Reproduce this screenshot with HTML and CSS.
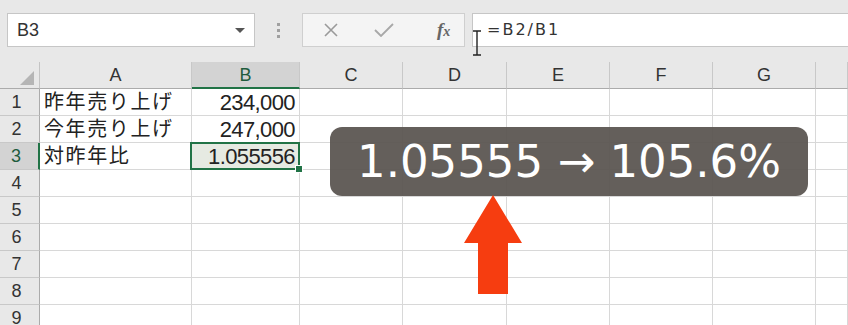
FILE: index.html
```html
<!DOCTYPE html>
<html lang="ja">
<head>
    <meta charset="UTF-8">
    <meta name="viewport" content="width=device-width, initial-scale=1.0">
    <title>対昨年比</title>
    <link rel="stylesheet" href="styles.css">
</head>
<body>
    <div class="toolbar">
        <div class="namebox">
            <span>B3</span>
            <svg class="caret" width="10" height="5" viewBox="0 0 10 5"><polygon points="0,0 10,0 5,5" fill="#555"/></svg>
        </div>
        <div class="grip"><i></i><i></i><i></i></div>
        <div class="fxbuttons">
            <svg width="16" height="14" viewBox="0 0 16 14"><path d="M2 1 L14 13 M14 1 L2 13" stroke="#9a9a9a" stroke-width="1.6" fill="none"/></svg>
            <svg width="20" height="14" viewBox="0 0 20 14"><path d="M1 7 L7 13 L19 1" stroke="#a8a8a8" stroke-width="1.8" fill="none"/></svg>
            <span class="fx">f<small>x</small></span>
        </div>
        <div class="formula">=B2/B1</div>
    </div>

    <div class="sheet">
        <div class="corner"><svg width="14" height="14" viewBox="0 0 14 14"><polygon points="14,0 14,14 0,14" fill="#b5b5b5"/></svg></div>
        <div class="ch">A</div>
        <div class="ch active">B</div>
        <div class="ch">C</div>
        <div class="ch">D</div>
        <div class="ch">E</div>
        <div class="ch">F</div>
        <div class="ch">G</div>
        <div class="ch"></div>

        <div class="rh">1</div>
        <div class="cell">昨年売り上げ</div>
        <div class="cell num">234,000</div>
        <div class="cell"></div><div class="cell"></div><div class="cell"></div><div class="cell"></div><div class="cell"></div><div class="cell"></div>

        <div class="rh">2</div>
        <div class="cell">今年売り上げ</div>
        <div class="cell num">247,000</div>
        <div class="cell"></div><div class="cell"></div><div class="cell"></div><div class="cell"></div><div class="cell"></div><div class="cell"></div>

        <div class="rh active">3</div>
        <div class="cell">対昨年比</div>
        <div class="cell num selected">1.055556</div>
        <div class="cell"></div><div class="cell"></div><div class="cell"></div><div class="cell"></div><div class="cell"></div><div class="cell"></div>

        <div class="rh">4</div>
        <div class="cell"></div><div class="cell"></div><div class="cell"></div><div class="cell"></div><div class="cell"></div><div class="cell"></div><div class="cell"></div><div class="cell"></div>

        <div class="rh">5</div>
        <div class="cell"></div><div class="cell"></div><div class="cell"></div><div class="cell"></div><div class="cell"></div><div class="cell"></div><div class="cell"></div><div class="cell"></div>

        <div class="rh">6</div>
        <div class="cell"></div><div class="cell"></div><div class="cell"></div><div class="cell"></div><div class="cell"></div><div class="cell"></div><div class="cell"></div><div class="cell"></div>

        <div class="rh">7</div>
        <div class="cell"></div><div class="cell"></div><div class="cell"></div><div class="cell"></div><div class="cell"></div><div class="cell"></div><div class="cell"></div><div class="cell"></div>

        <div class="rh">8</div>
        <div class="cell"></div><div class="cell"></div><div class="cell"></div><div class="cell"></div><div class="cell"></div><div class="cell"></div><div class="cell"></div><div class="cell"></div>

        <div class="rh">9</div>
        <div class="cell"></div><div class="cell"></div><div class="cell"></div><div class="cell"></div><div class="cell"></div><div class="cell"></div><div class="cell"></div><div class="cell"></div>
    </div>

    <!-- caption and arrow drawn over the sheet -->
    <div class="note">1.05555 → 105.6%</div>
    <svg class="arrow" width="58" height="99" viewBox="0 0 58 99"><polygon points="29,0 58,48 44,48 44,99 14,99 14,48 0,48" fill="#f63d10"/></svg>
    <svg class="ibeam" width="10" height="26" viewBox="0 0 10 26"><path d="M1 1 H9 M5 1 V25 M1 25 H9" stroke="#222" stroke-width="1.4" fill="none"/></svg>
</body>
</html>
```

FILE: styles.css
```css
body {
    margin: 0;
    width: 848px;
    height: 325px;
    overflow: hidden;
    background-color: #fff;
    font-family: "Liberation Sans", "Noto Sans CJK JP", sans-serif;
    color: #222;
    position: relative;
}
.toolbar {
    height: 62px;
    background-color: #e8e8e8;
    display: flex;
    align-items: flex-start;
    padding: 13px 0 0 7px;
    box-sizing: border-box;
}
.namebox {
    width: 248px;
    height: 34px;
    box-sizing: border-box;
    background-color: #fff;
    border: 1px solid #c6c6c6;
    display: flex;
    align-items: center;
    justify-content: space-between;
    padding: 0 9px 0 9px;
    font-size: 18px;
    color: #333;
}
.grip {
    width: 47px;
    height: 34px;
    display: flex;
    flex-direction: column;
    align-items: center;
    justify-content: center;
    gap: 3px;
}
.grip i {
    width: 3px;
    height: 3px;
    background-color: #a0a0a0;
}
.fxbuttons {
    width: 163px;
    height: 34px;
    box-sizing: border-box;
    background-color: #f4f4f4;
    border: 1px solid #cfcfcf;
    display: flex;
    align-items: center;
    padding: 0 0 0 20px;
    gap: 35px;
}
.fx {
    font-family: "Liberation Serif", serif;
    font-style: italic;
    font-weight: bold;
    font-size: 19px;
    color: #666;
    margin-left: 8px;
}
.fx small {
    font-size: 14px;
}
.formula {
    flex: 1;
    height: 34px;
    box-sizing: border-box;
    margin-left: 7px;
    background-color: #fff;
    border: 1px solid #c6c6c6;
    border-right: none;
    padding-left: 14px;
    font-family: "DejaVu Sans", sans-serif;
    font-size: 16px;
    letter-spacing: 2px;
    line-height: 32px;
    color: #333;
}
.sheet {
    display: grid;
    grid-template-columns: 40px 152px 108px 103px 104px 103px 103px 103px 32px;
    grid-auto-rows: 27px;
}
.corner, .ch, .rh, .cell {
    box-sizing: border-box;
    border-right: 1px solid #d8d8d8;
    border-bottom: 1px solid #d8d8d8;
}
.corner {
    background-color: #e8e8e8;
    border-right-color: #c4c4c4;
    border-bottom-color: #ababab;
    display: flex;
    align-items: flex-end;
    justify-content: flex-end;
    padding: 0 5px 3px 0;
}
.ch {
    background-color: #e8e8e8;
    border-right-color: #c8c8c8;
    border-bottom-color: #ababab;
    text-align: center;
    font-size: 18px;
    line-height: 27px;
    color: #333;
}
.ch.active {
    background-color: #d3d3d3;
    border-bottom: 2px solid #217346;
    color: #1f5c3d;
}
.rh {
    background-color: #e8e8e8;
    border-right-color: #ababab;
    border-bottom-color: #c8c8c8;
    text-align: center;
    padding-right: 6px;
    font-size: 18px;
    line-height: 27px;
    color: #333;
}
.rh.active {
    background-color: #d3d3d3;
    border-right: 2px solid #217346;
    color: #1f5c3d;
}
.cell {
    padding: 0 4px;
    font-size: 20px;
    letter-spacing: 1.6px;
    line-height: 27px;
    white-space: nowrap;
    overflow: visible;
}
.cell.num {
    text-align: right;
    font-size: 22px;
    letter-spacing: -0.6px;
    padding-right: 4px;
}
.cell.selected {
    position: relative;
    background-color: #e6eae2;
}
.cell.selected::before {
    content: "";
    position: absolute;
    top: -1px;
    left: -2px;
    right: -1px;
    bottom: -1px;
    border: 2px solid #217346;
}
.cell.selected::after {
    content: "";
    position: absolute;
    right: -4px;
    bottom: -4px;
    width: 6px;
    height: 6px;
    background-color: #217346;
    border: 1px solid #fff;
}
.note {
    position: absolute;
    left: 330px;
    top: 127px;
    width: 478px;
    height: 69px;
    border-radius: 12px;
    background-color: rgba(88, 83, 79, 0.93);
    color: #fff;
    font-family: "DejaVu Sans", sans-serif;
    font-size: 45px;
    line-height: 69px;
    text-align: center;
}
.arrow {
    position: absolute;
    left: 464px;
    top: 195px;
}
.ibeam {
    position: absolute;
    left: 472px;
    top: 30px;
}
```
